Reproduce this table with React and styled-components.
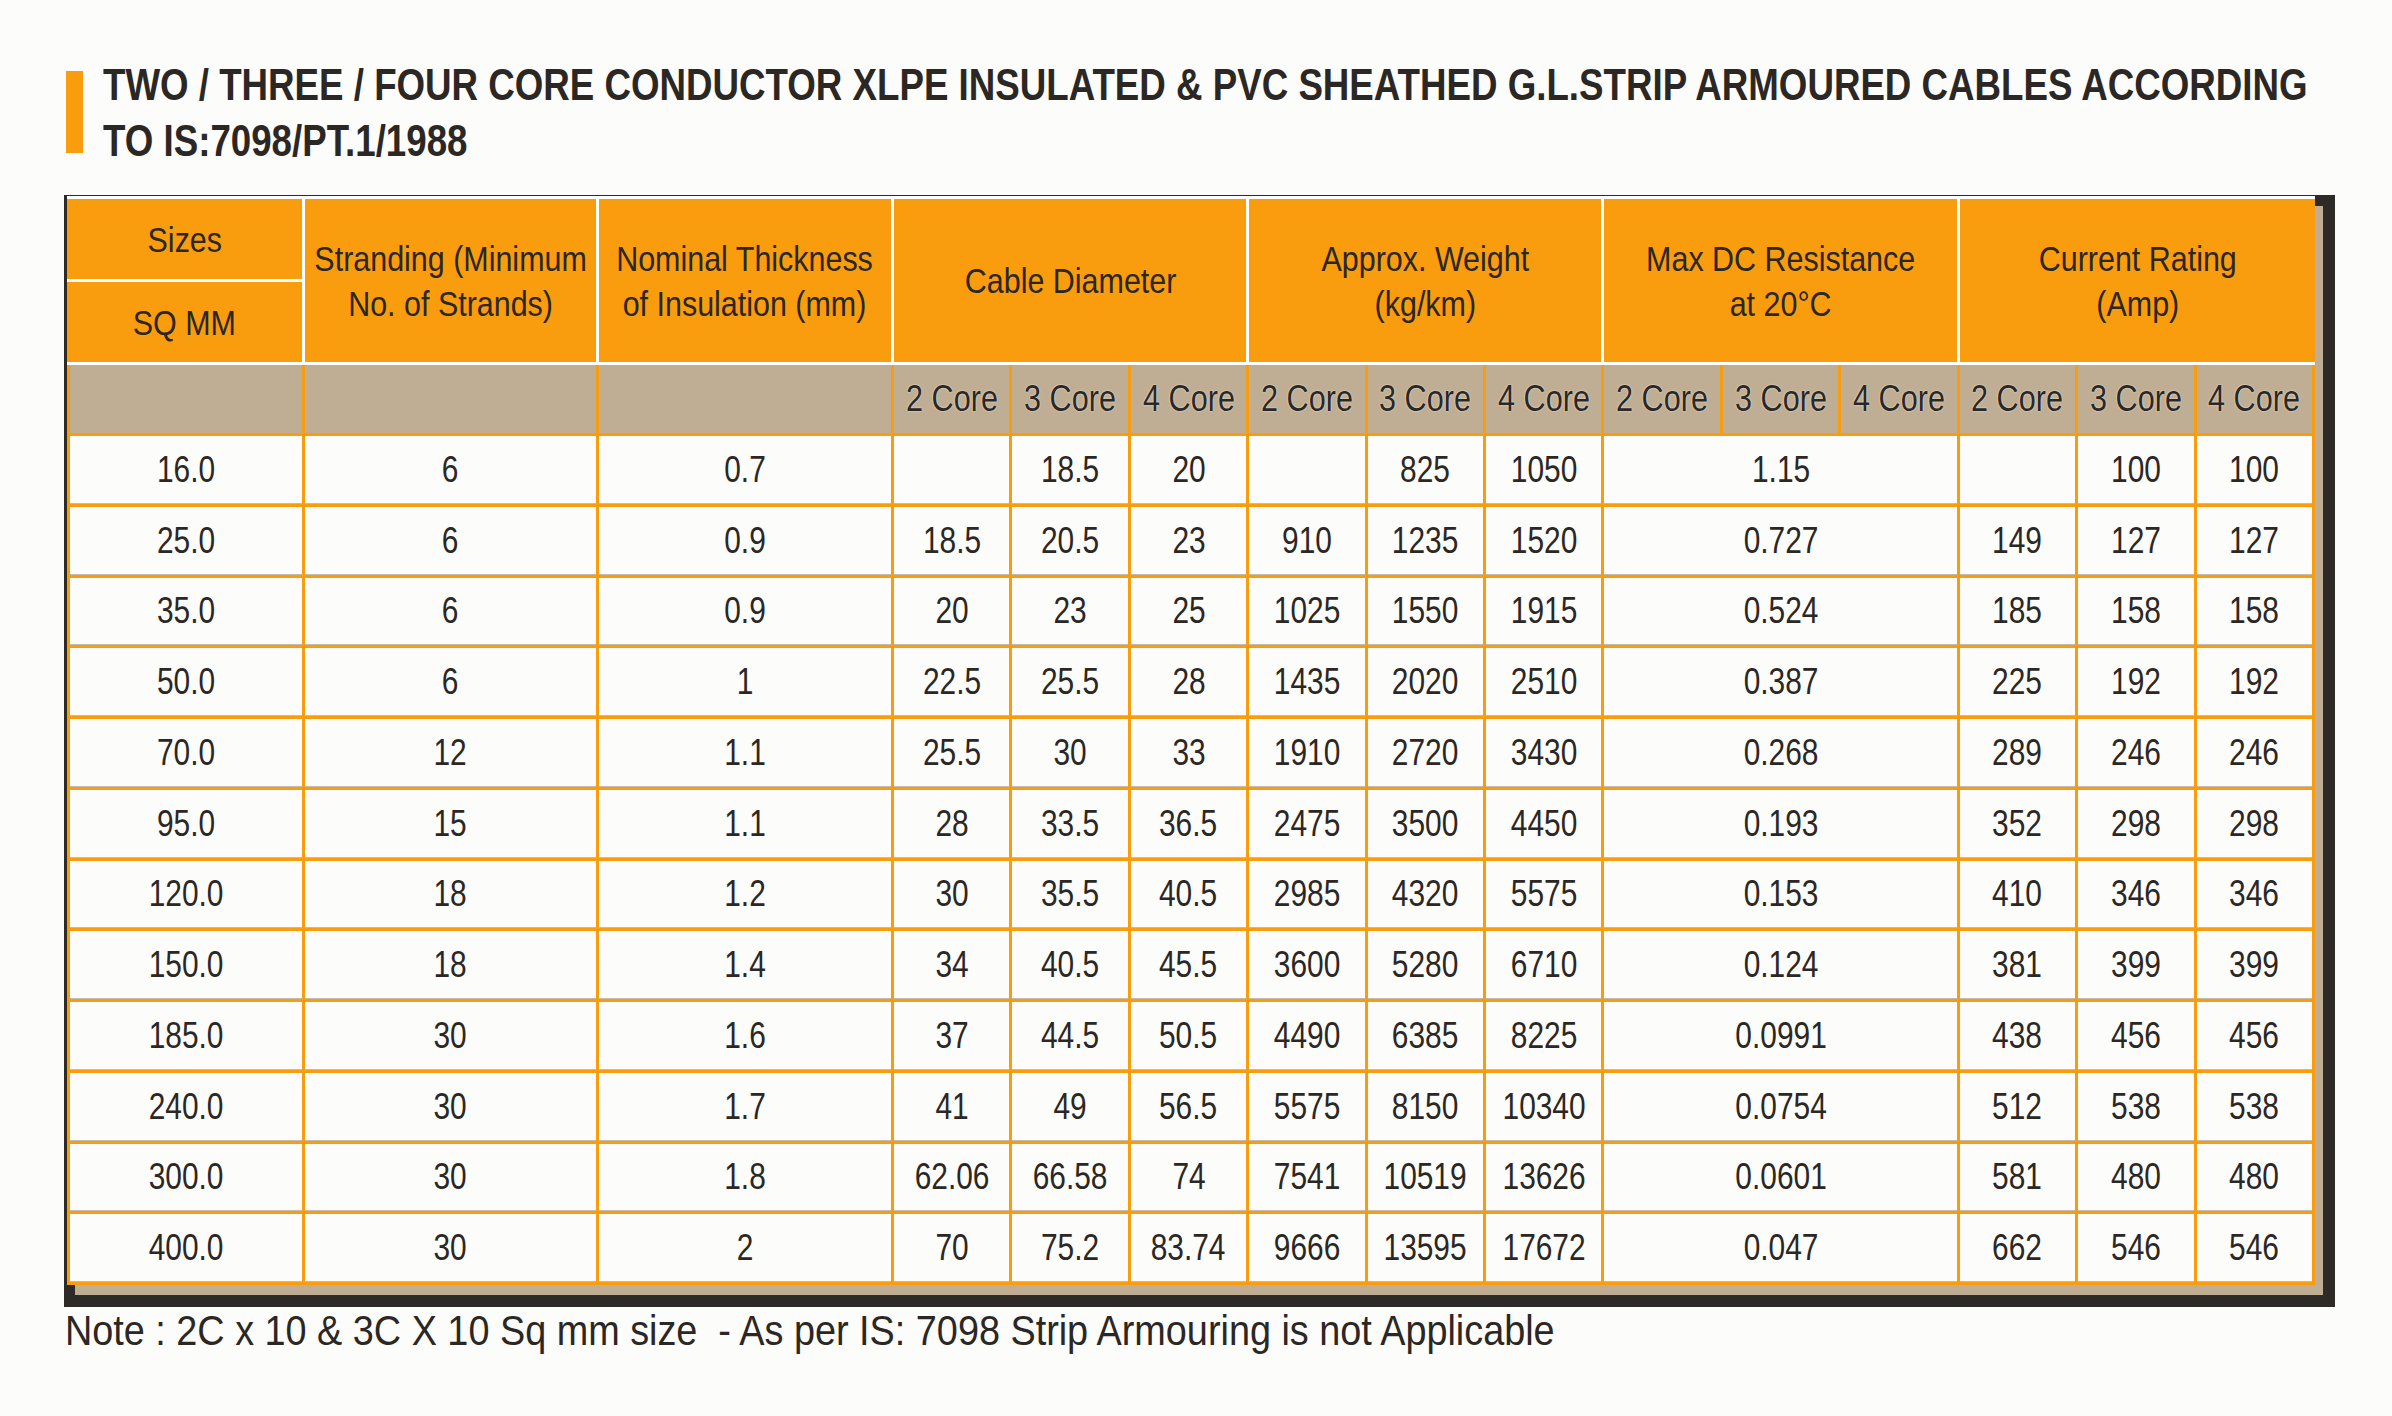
import React from 'react';
import styled, { createGlobalStyle } from 'styled-components';

const orange = '#f99c0e';
const tan = '#bfae93';
const dark = '#2e2a27';
const ink = '#2b2724';
const paper = '#fcfcfa';

const GlobalStyle = createGlobalStyle`
    html, body {
        margin: 0;
        padding: 0;
        background: ${paper};
        overflow: hidden;
    }
    body {
        font-family: "Liberation Sans", Arial, sans-serif;
        color: ${ink};
    }
`

const Page = styled.div`
    padding: 57px 0 0 64px;
`

const TitleRow = styled.div`
    display: flex;
    gap: 20px;
    padding-left: 2px;
`

const TitleBar = styled.div`
    flex-shrink: 0;
    width: 17px;
    margin: 14px 0 16px;
    background: ${orange};
`

const TitleText = styled.h1`
    flex: 1;
    min-width: 0;
    margin: 0;
    font-size: 44px;
    line-height: 56px;
    font-weight: 700;
    color: ${ink};
`

// text in the picture is a condensed face, so the regular one is squeezed
const Squeeze = styled.span`
    display: ${props => props.$block ? 'block' : 'inline-block'};
    white-space: pre;
    transform: scaleX(${props => props.$sx});
    transform-origin: ${props => props.$origin || 'center'};
`

const Frame = styled.div`
    width: max-content;
    margin-top: 26px;
    padding: 1px 20px 22px 3px;
    background: ${dark};
`

const Grid = styled.div`
    display: grid;
    width: 2248px;
    grid-template-columns: 238px 294px 295px repeat(12, 1fr);
    grid-template-rows: 83px 83px 71px repeat(12, 70.75px);
    border-top: 3px solid #fff;
    background: ${paper};
    box-shadow: 8px 10px 0 ${tan};
`

const HeadCell = styled.div`
    box-sizing: border-box;
    min-width: 0;
    display: flex;
    align-items: center;
    justify-content: center;
    grid-column: span ${props => props.$span || 1};
    grid-row: span ${props => props.$rows || 1};
    background: ${orange};
    border-right: ${props => props.$last ? 'none' : '3px solid #fff'};
    border-bottom: 3px solid #fff;
    font-size: 35px;
    line-height: 45px;
    text-align: center;
    color: ${ink};
`

const SubCell = styled.div`
    box-sizing: border-box;
    min-width: 0;
    display: flex;
    align-items: center;
    justify-content: center;
    background: ${tan};
    border-left: ${props => props.$first ? `3px solid ${orange}` : 'none'};
    border-right: 3px solid ${orange};
    border-bottom: 3px solid ${orange};
    font-size: 36px;
    color: ${ink};
    text-shadow: 0 0 2px rgba(255, 255, 255, 0.85);
`

const DataCell = styled.div`
    box-sizing: border-box;
    min-width: 0;
    display: flex;
    align-items: center;
    justify-content: center;
    grid-column: span ${props => props.$span || 1};
    background: ${paper};
    border-left: ${props => props.$first ? `3px solid ${orange}` : 'none'};
    border-right: 3px solid ${orange};
    border-bottom: 3px solid ${orange};
    box-shadow: inset 0 -1px 0 #c4bbae;
    font-size: 36px;
    color: ${ink};
`

const Note = styled.p`
    margin: 0;
    padding-left: 1px;
    font-size: 42px;
    line-height: 48px;
    color: ${ink};
`

const groups = [
    ['Cable Diameter'],
    ['Approx. Weight', '(kg/km)'],
    ['Max DC Resistance', 'at 20°C'],
    ['Current Rating', '(Amp)'],
]

const rows = [
    ['16.0', '6', '0.7', '', '18.5', '20', '', '825', '1050', '1.15', '', '100', '100'],
    ['25.0', '6', '0.9', '18.5', '20.5', '23', '910', '1235', '1520', '0.727', '149', '127', '127'],
    ['35.0', '6', '0.9', '20', '23', '25', '1025', '1550', '1915', '0.524', '185', '158', '158'],
    ['50.0', '6', '1', '22.5', '25.5', '28', '1435', '2020', '2510', '0.387', '225', '192', '192'],
    ['70.0', '12', '1.1', '25.5', '30', '33', '1910', '2720', '3430', '0.268', '289', '246', '246'],
    ['95.0', '15', '1.1', '28', '33.5', '36.5', '2475', '3500', '4450', '0.193', '352', '298', '298'],
    ['120.0', '18', '1.2', '30', '35.5', '40.5', '2985', '4320', '5575', '0.153', '410', '346', '346'],
    ['150.0', '18', '1.4', '34', '40.5', '45.5', '3600', '5280', '6710', '0.124', '381', '399', '399'],
    ['185.0', '30', '1.6', '37', '44.5', '50.5', '4490', '6385', '8225', '0.0991', '438', '456', '456'],
    ['240.0', '30', '1.7', '41', '49', '56.5', '5575', '8150', '10340', '0.0754', '512', '538', '538'],
    ['300.0', '30', '1.8', '62.06', '66.58', '74', '7541', '10519', '13626', '0.0601', '581', '480', '480'],
    ['400.0', '30', '2', '70', '75.2', '83.74', '9666', '13595', '17672', '0.047', '662', '546', '546'],
]

const Lines = ({ lines }) => (
    <Squeeze $sx={0.87}>
        {lines.join('\n')}
    </Squeeze>
)

const CableTable = () => {
    return (
        <Frame>
            <Grid>
                <HeadCell><Lines lines={['Sizes']} /></HeadCell>
                <HeadCell $rows={2}><Lines lines={['Stranding (Minimum', 'No. of Strands)']} /></HeadCell>
                <HeadCell $rows={2}><Lines lines={['Nominal Thickness', 'of Insulation (mm)']} /></HeadCell>
                {groups.map((g, i) => (
                    <HeadCell key={i} $span={3} $rows={2} $last={i === groups.length - 1}>
                        <Lines lines={g} />
                    </HeadCell>
                ))}
                <HeadCell><Lines lines={['SQ MM']} /></HeadCell>

                <SubCell $first />
                <SubCell />
                <SubCell />
                {[0, 1, 2, 3].map(g => ['2 Core', '3 Core', '4 Core'].map(c => (
                    <SubCell key={g + c}><Squeeze $sx={0.85}>{c}</Squeeze></SubCell>
                )))}

                {rows.map((r, ri) => r.map((v, ci) => (
                    <DataCell key={ri + '-' + ci} $first={ci === 0} $span={ci === 9 ? 3 : 1}>
                        <Squeeze $sx={0.83}>{v}</Squeeze>
                    </DataCell>
                )))}
            </Grid>
        </Frame>
    )
}

const App = () => {
    return (
        <Page>
            <GlobalStyle />
            <TitleRow>
                <TitleBar />
                <TitleText>
                    <Squeeze $block $sx={0.834} $origin="left">
                        TWO / THREE / FOUR CORE CONDUCTOR XLPE INSULATED &amp; PVC SHEATHED G.L.STRIP ARMOURED CABLES ACCORDING
                    </Squeeze>
                    <Squeeze $block $sx={0.834} $origin="left">
                        TO IS:7098/PT.1/1988
                    </Squeeze>
                </TitleText>
            </TitleRow>
            <CableTable />
            <Note>
                <Squeeze $sx={0.9} $origin="left">
                    {'Note : 2C x 10 & 3C X 10 Sq mm size  - As per IS: 7098 Strip Armouring is not Applicable'}
                </Squeeze>
            </Note>
        </Page>
    )
}

export default App;
